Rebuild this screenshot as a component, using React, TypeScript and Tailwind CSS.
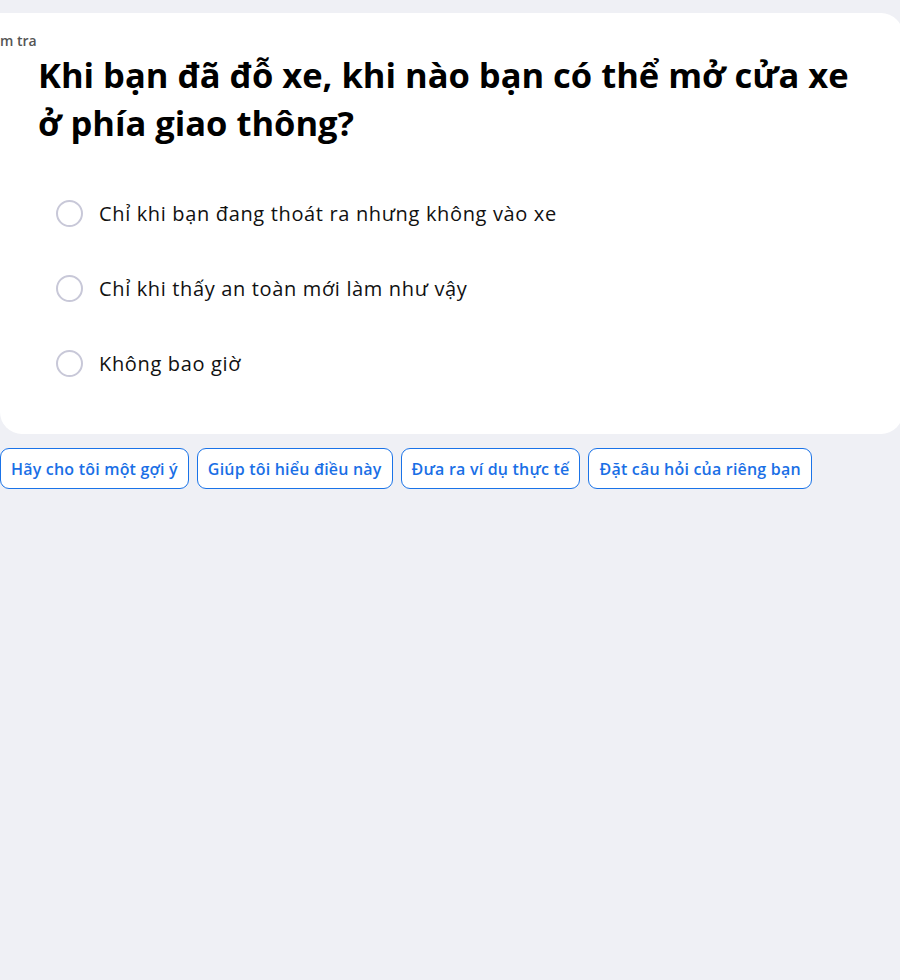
import React from "react";

const options = [
  "Chỉ khi bạn đang thoát ra nhưng không vào xe",
  "Chỉ khi thấy an toàn mới làm như vậy",
  "Không bao giờ",
];

const chips = [
  "Hãy cho tôi một gợi ý",
  "Giúp tôi hiểu điều này",
  "Đưa ra ví dụ thực tế",
  "Đặt câu hỏi của riêng bạn",
];

export default function App() {
  return (
    <div
      className="w-[900px] h-[980px] overflow-hidden bg-[#eff0f5] pt-[13px]"
      style={{ fontFamily: "'Open Sans', sans-serif" }}
    >
      <div className="w-[903px] bg-white rounded-tr-[22px] rounded-br-[22px] rounded-bl-[22px] pl-[38px] pt-[20px] pb-[57px]">
        <div className="ml-[-59px] text-[14px] font-semibold text-[#555] leading-[16px]">Kiểm tra</div>
        <h1 className="mt-[2px] text-[34.5px] font-bold text-black leading-[48px]">
          Khi bạn đã đỗ xe, khi nào bạn có thể mở cửa xe
          <br />ở phía giao thông?
        </h1>
        <div className="mt-[53px] flex flex-col gap-[48px] pl-[18px]">
          {options.map((o) => (
            <label key={o} className="flex items-center gap-[16px] h-[27px] cursor-pointer">
              <span className="w-[27px] h-[27px] rounded-full border-2 border-[#c8c8d8] bg-white shrink-0" />
              <span className="text-[20px] text-[#111] leading-[26px] tracking-[0.65px]">{o}</span>
            </label>
          ))}
        </div>
      </div>
      <div className="mt-[14px] flex gap-[8px]">
        {chips.map((c) => (
          <button
            key={c}
            className="h-[41px] px-[10px] rounded-[9px] border border-[#1a73e8] bg-white text-[#1a6fe6] text-[16px] font-semibold tracking-[0.2px] whitespace-nowrap"
          >
            {c}
          </button>
        ))}
      </div>
    </div>
  );
}
